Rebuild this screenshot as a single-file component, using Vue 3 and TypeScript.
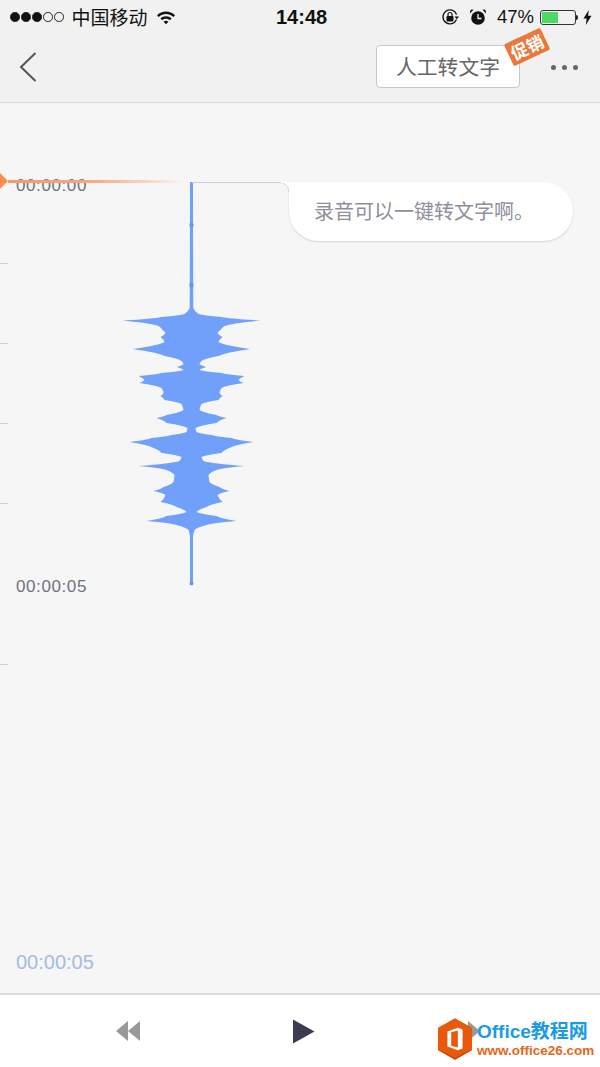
<script setup lang="ts">
// half width of the waveform at each y, centre line is x = 191.5
const profile: [number, number][] = [
  [182, 1.5], [308, 1.8], [314, 7], [317, 30], [320.5, 69], [326, 33], [330, 29], [333, 26], [337, 31], [342, 27],
  [349, 59], [356, 27], [361, 10], [364, 8], [367, 15], [370, 8], [373, 30], [376, 53], [380, 47], [383, 52],
  [388, 30], [393, 28], [396, 31], [400, 27], [404, 10], [410, 8], [415, 25], [418, 35], [423, 25], [428, 4],
  [432, 5], [435, 20], [438, 40], [442, 62], [448, 38], [453, 30], [457, 10], [461, 12], [466, 53], [470, 25],
  [475, 17], [482, 18], [487, 28], [491, 38], [495, 26], [502, 31], [507, 15], [512, 5], [516, 25], [521, 45],
  [525, 15], [530, 3], [537, 1.5], [584, 1.5]
]

const TOP = 103
const CX = 191.5

// concave edge between two points: leaves the wider point sharply, settles on the narrower one
const edge = (pts: [number, number][], side: number) =>
  pts
    .slice(1)
    .map(([y, w], i) => {
      const [py, pw] = pts[i]
      const wide = pw > w ? py : y
      const cy = wide + (py + y - 2 * wide) * 0.5
      const cw = Math.min(pw, w) + Math.abs(pw - w) * 0.2
      return `Q${CX + side * cw},${cy - TOP} ${CX + side * w},${y - TOP}`
    })
    .join('')

const wavePath = (() => {
  const [y0, w0] = profile[0]
  const back = [...profile].reverse()
  const [y1, w1] = back[0]
  return (
    `M${CX + w0},${y0 - TOP}` +
    edge(profile, 1) +
    `L${CX - w1},${y1 - TOP}` +
    edge(back, -1) +
    'Z'
  )
})()

const rows = [
  { label: '00:00:00' },
  { label: '' },
  { label: '' },
  { label: '' },
  { label: '' },
  { label: '00:00:05' },
  { label: '' }
]
</script>

<template>
  <div class="app">
    <header class="top">
      <div class="status">
        <div class="status-left">
          <span class="signal">
            <i class="on"></i><i class="on"></i><i class="on"></i><i></i><i></i>
          </span>
          <span class="carrier">中国移动</span>
          <svg class="wifi" width="20" height="15" viewBox="0 0 20 15">
            <path d="M1 5.2C6 .4 14 .4 19 5.2l-1.6 1.7C13.2 3 6.800 3 2.600 6.900z" fill="#111" />
            <path d="M4.400 8.500c3.200-2.900 8-2.900 11.200 0l-1.700 1.700c-2.200-2-5.600-2-7.800 0z" fill="#111" />
            <path d="M7.600 11.700c1.400-1.200 3.400-1.200 4.800 0L10 14.300z" fill="#111" />
          </svg>
        </div>
        <div class="clock">14:48</div>
        <div class="status-right">
          <svg class="lock" width="19" height="19" viewBox="0 0 19 19">
            <path d="M15.500 11.500A7 7 0 1 1 15.600 6.500" fill="none" stroke="#111" stroke-width="1.300" />
            <path d="M13.500 8.500h4.500l-2.200 2.700z" fill="#111" />
            <rect x="5.500" y="8" width="7" height="5.500" rx="1" fill="#111" />
            <path d="M7 8V6.500a2 2 0 0 1 4 0V8" fill="none" stroke="#111" stroke-width="1.200" />
          </svg>
          <svg class="alarm" width="18" height="18" viewBox="0 0 18 18">
            <circle cx="9" cy="10" r="6.800" fill="#111" />
            <path d="M9 6v4.500h3.500" fill="none" stroke="#f1f1f1" stroke-width="1.300" />
            <path d="M1 5.500 4.500 1.800 2.300 1.500C1.200 2.400.8 4 1 5.500zM17 5.500 13.500 1.800l2.200-.3c1.100.9 1.500 2.500 1.300 4z" fill="#111" />
          </svg>
          <span class="percent">47%</span>
          <span class="battery"><span class="battery-fill"></span></span>
          <span class="battery-tip"></span>
          <svg class="bolt" width="9" height="15" viewBox="0 0 9 15">
            <path d="M5.800 0 .5 8.500h3.200L2.800 15 8.500 5.800H5.100z" fill="#111" />
          </svg>
        </div>
      </div>
      <nav class="nav">
        <svg class="back" width="18" height="32" viewBox="0 0 18 32">
          <path d="M16.500 2 2 16l14.500 14" fill="none" stroke="#555" stroke-width="2" />
        </svg>
        <div class="nav-right">
          <button class="convert">
            人工转文字
            <span class="promo">促销</span>
          </button>
          <div class="more"><i></i><i></i><i></i></div>
        </div>
      </nav>
    </header>

    <main class="timeline">
      <div class="ruler">
        <div v-for="(row, i) in rows" :key="i" class="row">
          <span v-if="row.label" class="stamp">{{ row.label }}</span>
          <span v-else class="tick"></span>
        </div>
      </div>

      <svg class="wave" width="300" height="500" viewBox="0 0 300 500">
        <path :d="wavePath" fill="#70a0f9" />
        <circle cx="191.500" cy="122" r="2.200" fill="#6b95e6" />
        <circle cx="191.500" cy="182" r="2.200" fill="#6b95e6" />
        <circle cx="191.500" cy="480.500" r="2" fill="#6b95e6" />
      </svg>

      <div class="cursor">
        <span class="cursor-head"></span>
        <span class="cursor-line"></span>
      </div>

      <div class="link"></div>
      <div class="bubble">录音可以一键转文字啊。</div>

      <div class="total">00:00:05</div>
    </main>

    <footer class="player">
      <svg width="26" height="22" viewBox="0 0 26 22">
        <path d="M13 1v20L1 11zM25 1v20L13 11z" fill="#999" />
      </svg>
      <svg width="23" height="25" viewBox="0 0 23 25">
        <path d="M1 .5v24L22.500 12.500z" fill="#3b3b52" />
      </svg>
      <svg width="22" height="22" viewBox="0 0 22 22">
        <path d="M1 1v20L13 11z" fill="#999" />
      </svg>

      <div class="mark">
        <svg width="36" height="42" viewBox="0 0 38 44">
          <path d="M19 0 37 10v24L19 44 1 34V10z" fill="#e8590c" />
          <path d="M19 42 2 33v1l17 10 17-10v-1z" fill="#c24a0a" />
          <path d="M22 10 11 14v16l11 4 5-2V12zM22 13v18l-7-2V15z" fill="#fff" />
        </svg>
        <div class="mark-text">
          <div class="mark-title">Office教程网</div>
          <div class="mark-url">www.office26.com</div>
        </div>
      </div>
    </footer>
  </div>
</template>

<style>
html,
body {
  margin: 0;
  background: #f6f6f6;
}
</style>

<style scoped>
.app {
  width: 600px;
  height: 1067px;
  display: flex;
  flex-direction: column;
  overflow: hidden;
  background: #f6f6f6;
  font-family: "Noto Sans CJK SC", "Liberation Sans", sans-serif;
}

.top {
  height: 103px;
  flex-shrink: 0;
  box-sizing: border-box;
  background: #f1f1f1;
  border-bottom: 1px solid #d9d9d9;
}

.status {
  height: 34px;
  padding: 0 8px 0 10px;
  display: flex;
  align-items: center;
  justify-content: space-between;
  color: #111;
  position: relative;
}

.status-left,
.status-right {
  display: flex;
  align-items: center;
}

.signal {
  display: flex;
  gap: 1.500px;
}

.signal i {
  width: 9.500px;
  height: 9.500px;
  box-sizing: border-box;
  border: 1px solid #222;
  border-radius: 50%;
}

.signal i.on {
  background: #111;
}

.carrier {
  margin-left: 8px;
  font-size: 19px;
  line-height: 34px;
}

.wifi {
  margin-left: 8px;
}

.clock {
  position: absolute;
  left: 276px;
  top: 0;
  line-height: 34px;
  font-family: "Liberation Sans", sans-serif;
  font-size: 20px;
  font-weight: 700;
}

.lock {
  margin-right: 9px;
}

.alarm {
  margin-right: 10px;
}

.percent {
  font-family: "Liberation Sans", sans-serif;
  font-size: 18.500px;
  margin-right: 6px;
}

.battery {
  width: 36px;
  height: 15px;
  box-sizing: border-box;
  border: 1px solid #333;
  border-radius: 3px;
  padding: 1px;
  display: block;
}

.battery-fill {
  display: block;
  width: 16px;
  height: 100%;
  background: #4cd964;
}

.battery-tip {
  width: 2px;
  height: 5px;
  background: #222;
  margin: 0 5px 0 0;
  border-radius: 0 2px 2px 0;
}

.nav {
  height: 68px;
  padding: 0 22px 0 19px;
  display: flex;
  align-items: center;
  justify-content: space-between;
}

.back {
  margin-top: -2px;
}

.nav-right {
  display: flex;
  align-items: center;
  gap: 31px;
}

.convert {
  position: relative;
  width: 144px;
  height: 43px;
  margin-top: -4px;
  padding: 0;
  background: #fff;
  border: 1px solid #c8c8c8;
  border-radius: 4px;
  color: #666;
  font-family: inherit;
  font-size: 20.800px;
}

.promo {
  position: absolute;
  right: -28px;
  top: -11px;
  width: 40px;
  height: 24px;
  background: #e8793a;
  color: #fff;
  font-size: 17px;
  font-weight: 700;
  line-height: 24px;
  text-align: center;
  border-radius: 2px;
  transform: rotate(-25deg);
}

.more {
  display: flex;
  gap: 6px;
  margin-top: -2px;
}

.more i {
  width: 5px;
  height: 5px;
  border-radius: 50%;
  background: #666;
}

.timeline {
  flex: 1;
  position: relative;
}

.ruler {
  padding-top: 40px;
  display: flex;
  flex-direction: column;
}

.row {
  height: 80.200px;
  display: flex;
  align-items: center;
}

.stamp {
  margin-left: 16px;
  font-family: "Liberation Sans", sans-serif;
  font-size: 17px;
  letter-spacing: 0.600px;
  color: #6f7282;
  position: relative;
  top: 3px;
}

.tick {
  width: 8px;
  height: 1px;
  background: #cfcfcf;
}

.wave {
  position: absolute;
  left: 0;
  top: 0;
}

.cursor {
  position: absolute;
  left: 0;
  top: 70px;
  display: flex;
  align-items: center;
}

.cursor-head {
  width: 0;
  height: 0;
  border-left: 8px solid #ff8c4f;
  border-top: 8px solid transparent;
  border-bottom: 8px solid transparent;
}

.cursor-line {
  width: 178px;
  height: 3px;
  background: linear-gradient(to right, #f59a68, #f6a77c 45%, rgba(246, 190, 150, 0));
}

.link {
  position: absolute;
  left: 192px;
  top: 79px;
  width: 96px;
  height: 9px;
  border-top: 1px solid #c6d0e2;
  border-right: 1px solid #d8dde6;
  border-top-right-radius: 9px;
}

.bubble {
  position: absolute;
  left: 289px;
  top: 79px;
  width: 284px;
  height: 59px;
  box-sizing: border-box;
  padding-left: 25px;
  background: #fff;
  border-radius: 0 30px 30px 30px;
  box-shadow: 0 1px 2px rgba(0, 0, 0, 0.14);
  color: #8f8f9c;
  font-size: 20px;
  line-height: 58px;
}

.bubble::before {
  content: "";
  position: absolute;
  left: -8px;
  top: 0;
  width: 8px;
  height: 9px;
  background: radial-gradient(circle at 0 100%, transparent 8px, #fff 8.500px);
}

.total {
  position: absolute;
  left: 16px;
  bottom: 19px;
  font-family: "Liberation Sans", sans-serif;
  font-size: 20px;
  color: #a3bde2;
}

.player {
  position: relative;
  height: 74px;
  flex-shrink: 0;
  box-sizing: border-box;
  background: #fff;
  border-top: 2px solid #dedede;
  display: grid;
  grid-template-columns: repeat(3, 175px);
  justify-content: center;
  justify-items: center;
  align-items: center;
  padding: 0 0 0 6px;
}

.mark {
  position: absolute;
  left: 437px;
  top: 23px;
  display: flex;
  align-items: center;
  gap: 4px;
}

.mark-text {
  font-family: "Liberation Sans", "Noto Sans CJK SC", sans-serif;
  font-weight: 700;
  white-space: nowrap;
}

.mark-title {
  font-size: 19px;
  line-height: 22px;
  color: #1a9be6;
}

.mark-url {
  font-size: 13.500px;
  line-height: 15px;
  color: #e8661a;
}
</style>
